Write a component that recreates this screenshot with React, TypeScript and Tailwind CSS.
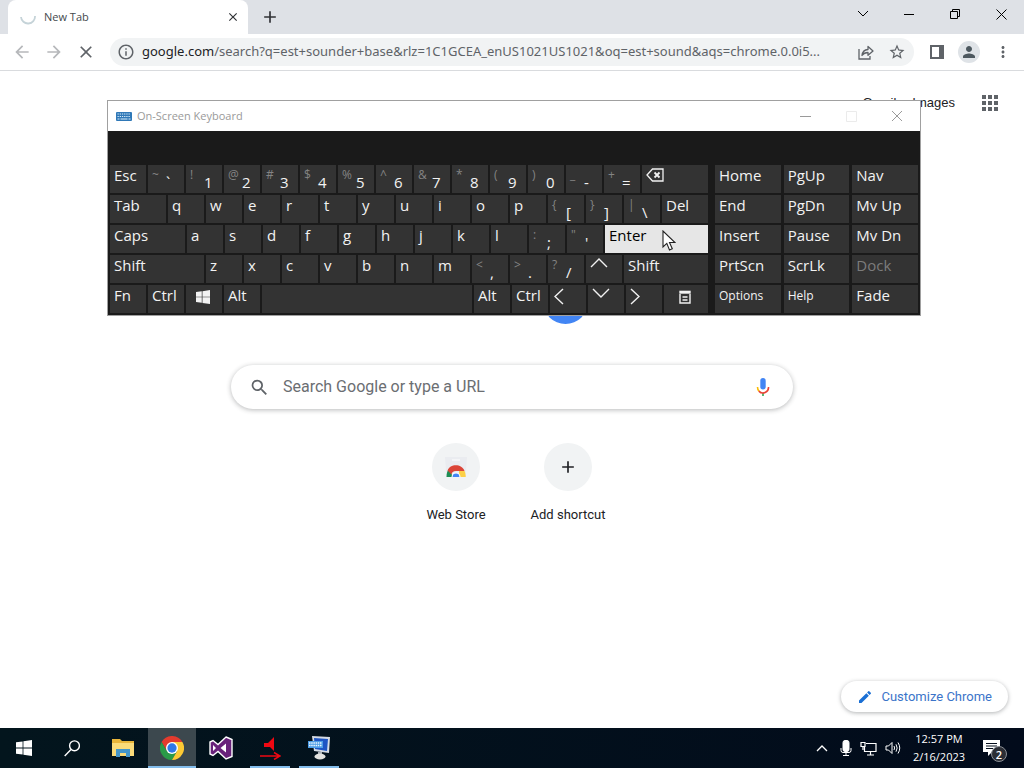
import type { ReactNode } from 'react'
import clsx from 'clsx'
import {
  MdAdd,
  MdApps,
  MdArrowBack,
  MdArrowForward,
  MdClose,
  MdEdit,
  MdInfoOutline,
  MdMoreVert,
  MdPerson,
  MdSearch,
  MdStarBorder,
} from 'react-icons/md'

type KeyDef = {
  label?: string
  shifted?: string
  icon?: ReactNode
  name?: string
  width?: string
  tone?: 'pressed' | 'disabled'
  small?: boolean
}

const letters = (text: string): KeyDef[] => text.split('').map((label) => ({ label }))

const pairs = (text: string): KeyDef[] =>
  text.split(' ').map((pair) => ({ shifted: pair[0], label: pair[1] }))

const BackspaceIcon = (
  <svg width="18" height="14" viewBox="0 0 18 14" fill="none" stroke="currentColor" strokeWidth="1.3">
    <path d="M1 7 6.500 1H17v12H6.500z" />
    <path d="m8.500 4.500 5 5m0-5-5 5" strokeWidth="1.800" />
  </svg>
)

const Chevron = ({ d, width, height }: { d: string; width: number; height: number }) => (
  <svg width={width} height={height} viewBox={`0 0 ${width} ${height}`} fill="none" stroke="currentColor" strokeWidth="1.4">
    <path d={d} />
  </svg>
)

const WindowsIcon = ({ size }: { size: number }) => (
  <svg width={size} height={size} viewBox="0 0 16 16" fill="currentColor">
    <path d="M0 2.300 6.600 1.400V7.600H0zM7.400 1.300 16 0v7.600H7.400zM0 8.400h6.600v6.200L0 13.700zM7.400 8.400H16V16l-8.600-1.200z" />
  </svg>
)

const MenuIcon = (
  <svg width="12" height="14" viewBox="0 0 12 14" fill="none" stroke="currentColor" strokeWidth="1.4">
    <path d="M1 4v9h10V4M3.500 7h5M3.500 10h5" />
    <path d="M.3 2.200h11.400" strokeWidth="3" />
  </svg>
)

const MAIN_ROWS: KeyDef[][] = [
  [
    { label: 'Esc' },
    ...pairs('~` !1 @2 #3 $4 %5 ^6 &7 *8 (9 )0 _- +='),
    { icon: BackspaceIcon, name: 'Backspace', width: 'flex-1' },
  ],
  [
    { label: 'Tab', width: 'w-14' },
    ...letters('qwertyuiop'),
    ...pairs('{[ }] |\\'),
    { label: 'Del', width: 'flex-1' },
  ],
  [
    { label: 'Caps', width: 'w-[75px]' },
    ...letters('asdfghjkl'),
    ...pairs(':; "\''),
    { label: 'Enter', width: 'flex-1', tone: 'pressed' },
  ],
  [
    { label: 'Shift', width: 'w-[94px]' },
    ...letters('zxcvbnm'),
    ...pairs('<, >. ?/'),
    { icon: <Chevron d="m1 9 8-8 8 8" width={18} height={10} />, name: 'Up' },
    { label: 'Shift', width: 'flex-1' },
  ],
  [
    { label: 'Fn' },
    { label: 'Ctrl' },
    { icon: <span className="block pt-0.5 pl-1.5"><WindowsIcon size={14} /></span>, name: 'Windows' },
    { label: 'Alt' },
    { name: 'Space', width: 'flex-1' },
    { label: 'Alt' },
    { label: 'Ctrl' },
    { icon: <Chevron d="M9 1 1 8.500 9 16" width={10} height={17} />, name: 'Left' },
    { icon: <Chevron d="m1 1 8 8 8-8" width={18} height={10} />, name: 'Down' },
    { icon: <Chevron d="m1 1 8 7.500L1 16" width={10} height={17} />, name: 'Right' },
    { icon: <span className="block pt-0.5 pl-[11px]">{MenuIcon}</span>, name: 'Menu', width: 'w-11' },
  ],
]

const SIDE_KEYS: KeyDef[] = [
  { label: 'Home' },
  { label: 'PgUp' },
  { label: 'Nav' },
  { label: 'End' },
  { label: 'PgDn' },
  { label: 'Mv Up' },
  { label: 'Insert' },
  { label: 'Pause' },
  { label: 'Mv Dn' },
  { label: 'PrtScn' },
  { label: 'ScrLk' },
  { label: 'Dock', tone: 'disabled' },
  { label: 'Options', small: true },
  { label: 'Help', small: true },
  { label: 'Fade' },
]

function Key({ label, shifted, icon, name, width = 'w-9', tone, small }: KeyDef) {
  return (
    <button
      type="button"
      aria-label={name}
      disabled={tone === 'disabled'}
      className={clsx(
        'flex h-7 items-start overflow-hidden whitespace-nowrap pl-1 text-left leading-5',
        width,
        width !== 'flex-1' && 'shrink-0',
        small ? 'pt-px text-xs' : 'text-[15px]',
        tone === 'pressed' && 'bg-[#e6e6e6] text-black',
        tone === 'disabled' && 'bg-[#333] text-[#7c7c7c]',
        !tone && 'bg-[#333] text-[#f2f2f2]',
      )}
    >
      {shifted && <span className="w-3.5 shrink-0 text-xs leading-5 text-[#848484]">{shifted}</span>}
      {shifted ? <span className="pt-[7px]">{label}</span> : label}
      {icon && <span className="pt-[3px]">{icon}</span>}
    </button>
  )
}

function OnScreenKeyboard() {
  return (
    <section
      aria-label="On-Screen Keyboard"
      className="absolute left-[107px] top-[100px] w-[814px] border border-[#a0a0a0] bg-[#1a1a1a] font-['Open_Sans',sans-serif]"
    >
      <header className="flex h-[30px] items-center bg-white pl-2 text-[#9a9a9a]">
        <svg width="16" height="9" viewBox="0 0 16 9">
          <rect width="16" height="9" rx="1" fill="#2f78b7" />
          <path d="M1.500 2h13M1.500 4.500h13" stroke="#d8ecfa" strokeWidth="1.200" strokeDasharray="1.300 .9" />
          <path d="M1.500 7h2m1 0h7m1 0h2" stroke="#d8ecfa" strokeWidth="1.200" />
        </svg>
        <h2 className="flex-1 pl-[5px] text-[11px]">On-Screen Keyboard</h2>
        <button type="button" aria-label="Minimize" className="flex w-[46px] justify-center">
          <svg width="11" height="11" viewBox="0 0 11 11" stroke="currentColor"><path d="M0 5.500h11" /></svg>
        </button>
        <button type="button" aria-label="Maximize" disabled className="flex w-[46px] justify-center text-[#ebebeb]">
          <svg width="11" height="11" viewBox="0 0 11 11" fill="none" stroke="currentColor"><path d="M.5.5h10v10H.5z" /></svg>
        </button>
        <button type="button" aria-label="Close" className="flex w-[46px] justify-center">
          <svg width="12" height="12" viewBox="0 0 12 12" stroke="currentColor"><path d="m1 1 10 10M11 1 1 11" /></svg>
        </button>
      </header>
      <div className="flex gap-[7px] px-0.5 pb-0.5 pt-[34px]">
        <div className="flex w-[598px] flex-col gap-0.5">
          {MAIN_ROWS.map((row, i) => (
            <div key={i} className="flex gap-0.5">
              {row.map((key, j) => (
                <Key key={j} {...key} />
              ))}
            </div>
          ))}
        </div>
        <div className="grid flex-1 grid-cols-3 gap-x-[3px] gap-y-0.5">
          {SIDE_KEYS.map((key) => (
            <Key key={key.label} {...key} width="w-full" />
          ))}
        </div>
      </div>
      <svg className="absolute left-[554px] top-[129px]" width="14" height="21" viewBox="0 0 14 21">
        <path d="M1 1v16l3.800-3.600L7.500 20l2.800-1.200-2.800-6.300H13z" fill="#fff" stroke="#222" strokeWidth="1.100" />
      </svg>
    </section>
  )
}

function TabStrip() {
  return (
    <div className="flex h-[34px] items-stretch bg-[#dee1e6] pl-2 font-['Open_Sans',sans-serif]">
      <div className="flex w-60 items-center rounded-t-lg bg-white pl-3 pr-2 text-[#45494d]">
        <svg width="16" height="16" viewBox="0 0 16 16" fill="none" stroke="#c5d3d8" strokeWidth="1.800">
          <path d="M1 8a7 7 0 0 0 14-1" />
        </svg>
        <span className="flex-1 pl-2 text-[11px]">New Tab</span>
        <button type="button" aria-label="Close tab" className="text-[#303236]">
          <MdClose size={14} stroke="currentColor" />
        </button>
      </div>
      <button type="button" aria-label="New tab" className="px-3 text-[#303236]">
        <MdAdd size={20} />
      </button>
      <div className="flex flex-1 items-center justify-end pb-1.5 text-black">
        <button type="button" aria-label="Search tabs" className="flex w-[46px] justify-center">
          <svg width="12" height="8" viewBox="0 0 12 8" fill="none" stroke="currentColor"><path d="m1 1 5 5 5-5" /></svg>
        </button>
        <button type="button" aria-label="Minimize" className="flex w-[46px] justify-center">
          <svg width="10" height="10" viewBox="0 0 10 10" stroke="currentColor"><path d="M0 5.500h10" /></svg>
        </button>
        <button type="button" aria-label="Restore" className="flex w-[46px] justify-center">
          <svg width="10" height="10" viewBox="0 0 10 10" fill="none" stroke="currentColor"><path d="M.5 2.500h7v7h-7zM2.500 2.500v-2h7v7h-2" /></svg>
        </button>
        <button type="button" aria-label="Close" className="flex w-[46px] justify-center">
          <svg width="11" height="11" viewBox="0 0 11 11" stroke="currentColor"><path d="m.5.5 10 10m0-10-10 10" /></svg>
        </button>
      </div>
    </div>
  )
}

function Toolbar() {
  return (
    <div className="flex h-[37px] items-center border-b border-[#d9dbde] bg-white pl-3 pr-3 text-[#5f6368]">
      <div className="flex w-[98px] gap-3">
        <button type="button" aria-label="Back" className="text-[#b6b8bb]"><MdArrowBack size={20} /></button>
        <button type="button" aria-label="Forward" className="text-[#b6b8bb]"><MdArrowForward size={20} /></button>
        <button type="button" aria-label="Stop"><MdClose size={20} /></button>
      </div>
      <div className="flex h-7 flex-1 items-center rounded-full bg-[#f1f3f4] pl-[7px] pr-2 font-['Noto_Sans',sans-serif] text-[13px]">
        <MdInfoOutline size={18} />
        <label htmlFor="omnibox" className="pl-[7px] text-[#202124]">google.com</label>
        <input
          id="omnibox"
          type="text"
          readOnly
          value="/search?q=est+sounder+base&rlz=1C1GCEA_enUS1021US1021&oq=est+sound&aqs=chrome.0.0i5..."
          className="min-w-0 flex-1 bg-transparent outline-none"
        />
        <button type="button" aria-label="Share" className="mr-3.5">
          <svg width="16" height="15" viewBox="0 0 16 15" fill="none" stroke="currentColor" strokeWidth="1.300">
            <path d="M1 4v10h11v-3" />
            <path d="M4 10.500C4.500 6.500 7 4.700 10 4.500V1.500L15 6l-5 4.300V7.500C7.500 7.500 5.500 8.300 4 10.500z" strokeLinejoin="round" />
          </svg>
        </button>
        <button type="button" aria-label="Bookmark"><MdStarBorder size={18} /></button>
      </div>
      <div className="flex items-center gap-3.5 pl-4">
        <button type="button" aria-label="Side panel">
          <svg width="14" height="14" viewBox="0 0 14 14" fill="currentColor"><path d="M0 0h14v14H0zM2 2v10h7V2z" fillRule="evenodd" /></svg>
        </button>
        <button type="button" aria-label="Profile" className="flex size-[22px] items-center justify-center rounded-full bg-[#dfe3e7] text-[#4d585f]">
          <MdPerson size={18} />
        </button>
        <button type="button" aria-label="Menu"><MdMoreVert size={18} /></button>
      </div>
    </div>
  )
}

const MicIcon = (
  <svg width="24" height="24" viewBox="0 0 24 24">
    <rect x="9.300" y="3" width="5.400" height="11.500" rx="2.700" fill="#4285f4" />
    <path d="M11.200 18h1.600v3h-1.600z" fill="#34a853" />
    <path d="M6.500 12c0 1.800.5 3.200 1.600 4.300" fill="none" stroke="#fbbc04" strokeWidth="1.600" />
    <path d="M7.900 16.100A5.500 5.500 0 0 0 17.500 12" fill="none" stroke="#ea4335" strokeWidth="1.600" />
  </svg>
)

const WebStoreIcon = (
  <svg width="24" height="24" viewBox="0 0 24 24">
    <path d="M1 2h22l-1.500 20h-19z" fill="#eaecf0" />
    <path d="M8 4h8v2H8z" fill="#f4f5f7" />
    <path d="M2.500 22c0-3.500.8-6 2-7.500L9.500 22z" fill="#1e8e55" />
    <path d="M3.600 15.500C6 8.500 18 8.500 20.500 16H12c-3 0-4 1.500-4.500 3.500z" fill="#db4437" />
    <path d="M15 16h5.500c.9 1.600 1.200 3.500 1.200 6H15z" fill="#fdd046" />
    <path d="M7.500 22a4.500 4.500 0 0 1 9 0z" fill="#fff" />
    <path d="M8.600 22a3.400 3.400 0 0 1 6.800 0z" fill="#4285f4" />
  </svg>
)

function Shortcut({ label, children }: { label: string; children: ReactNode }) {
  return (
    <a href="#" className="flex w-28 flex-col items-center gap-4 text-[13px] leading-4 text-[#202124]">
      <span className="flex size-12 items-center justify-center rounded-full bg-[#f1f3f4]">{children}</span>
      {label}
    </a>
  )
}

function NewTabPage() {
  return (
    <main className="flex flex-1 flex-col bg-white font-['Roboto',sans-serif]">
      <nav className="flex h-16 items-center justify-end gap-4 pr-[22px] font-['Liberation_Sans',sans-serif] text-[13px] text-[#202124]">
        <a href="#">Gmail</a>
        <a href="#">Images</a>
        <button type="button" aria-label="Google apps" className="ml-[7px] text-[#5f6368]"><MdApps size={24} /></button>
      </nav>
      <div className="flex flex-1 flex-col items-center">
        <div className="mt-36 size-[45px] translate-x-[53px] rounded-full bg-[#4285f4]" />
        <div className="mt-[41px] flex h-11 w-full max-w-[562px] items-center rounded-full bg-white px-[18px] text-[#5f6368] shadow-[0_1px_5px_rgba(32,33,36,0.32)]">
          <label htmlFor="search"><MdSearch size={21} /></label>
          <input
            id="search"
            type="text"
            placeholder="Search Google or type a URL"
            className="min-w-0 flex-1 bg-transparent pl-[13px] text-base outline-none placeholder:text-[#6b6e72]"
          />
          <button type="button" aria-label="Search by voice">{MicIcon}</button>
        </div>
        <div className="mt-[34px] flex">
          <Shortcut label="Web Store">{WebStoreIcon}</Shortcut>
          <Shortcut label="Add shortcut"><MdAdd size={20} /></Shortcut>
        </div>
      </div>
      <div className="flex justify-end px-4 pb-4">
        <button
          type="button"
          className="flex h-[31px] items-center gap-2 rounded-full bg-white px-4 text-[13px] text-[#3b74c9] shadow-[0_1px_4px_rgba(60,64,67,0.4)]"
        >
          <MdEdit size={16} className="text-[#1a6fd4]" />
          Customize Chrome
        </button>
      </div>
    </main>
  )
}

const FolderIcon = (
  <svg width="22" height="20" viewBox="0 0 22 20">
    <path d="M0 1h8l2 2h12v15H0z" fill="#e9b53a" />
    <path d="M0 5h22v13H0z" fill="#fbdb79" />
    <path d="M4 11h14v8h-4v-4H8v4H4z" fill="#4596c9" />
  </svg>
)

const ChromeIcon = (
  <svg width="24" height="24" viewBox="0 0 48 48">
    <path d="M24 12h20.800A24 24 0 0 0 3.200 12L13.600 30z" fill="#e33b2e" />
    <path d="M13.600 30 3.200 12A24 24 0 0 0 24 48l10.400-18z" fill="#2a9b48" />
    <path d="M34.400 30 24 48a24 24 0 0 0 20.800-36H24z" fill="#fcc934" />
    <circle cx="24" cy="24" r="12" fill="#fff" />
    <circle cx="24" cy="24" r="9.300" fill="#3078e8" />
  </svg>
)

const VisualStudioIcon = (
  <svg width="24" height="24" viewBox="0 0 24 24">
    <path d="M17 1 23 3.500v17L17 23l-8-7.500L4 19.500 1 18V6l3-1.500 5 4z" fill="#68217a" stroke="#fff" strokeWidth="1.400" />
    <path d="M17 7.500 11.500 12l5.500 4.500zM4 9v6l3-3z" fill="#fff" />
  </svg>
)

const RedArrowIcon = (
  <svg width="22" height="24" viewBox="0 0 22 24">
    <path d="M15 1v14l-4-4H5V7h4z" fill="#f00812" />
    <path d="M1 20h20m-6-3.500 6 3.500-6 3.500" fill="none" stroke="#f00812" strokeWidth="1.500" />
  </svg>
)

const OskTaskIcon = (
  <svg width="24" height="24" viewBox="0 0 24 24">
    <path d="m5 0 18 1-1 16-15-2z" fill="#d5dbe4" />
    <path d="m7 2 14 1-1 12-12-2z" fill="#1d55c4" />
    <path d="M11 16h4v4h-4z" fill="#aab0b7" />
    <ellipse cx="13" cy="20.500" rx="5.500" ry="3" fill="#e2e2df" />
    <rect x="1" y="5" width="15" height="7" fill="#4c9de6" />
    <path d="M2 7h13M2 9.500h13" stroke="#eaf5ff" strokeWidth="1.300" strokeDasharray="1.500 .7" />
  </svg>
)

const TASKS = [
  { name: 'File Explorer', icon: FolderIcon, state: 'idle' },
  { name: 'Google Chrome', icon: ChromeIcon, state: 'active' },
  { name: 'Visual Studio', icon: VisualStudioIcon, state: 'idle' },
  { name: 'Recorder', icon: RedArrowIcon, state: 'open' },
  { name: 'On-Screen Keyboard', icon: OskTaskIcon, state: 'open' },
]

function Taskbar() {
  return (
    <footer className="flex h-10 items-stretch bg-linear-to-r from-[#03151d] to-[#020b1b] font-['Open_Sans',sans-serif] text-white">
      <button type="button" aria-label="Start" className="flex w-12 items-center justify-center"><WindowsIcon size={16} /></button>
      <button type="button" aria-label="Search" className="flex w-12 items-center justify-center">
        <svg width="16" height="17" viewBox="0 0 16 17" fill="none" stroke="currentColor" strokeWidth="1.400">
          <circle cx="10.500" cy="5.800" r="4.900" />
          <path d="M7 9.500.7 16" />
        </svg>
      </button>
      <div className="ml-[3px] flex gap-px">
        {TASKS.map((task) => (
          <button
            key={task.name}
            type="button"
            aria-label={task.name}
            className={clsx('flex w-12 flex-col items-center', task.state === 'active' && 'bg-[#3c484e]')}
          >
            <span className="flex flex-1 items-center">{task.icon}</span>
            <span
              className={clsx(
                '-mt-0.5 h-0.5',
                task.state === 'active' && 'w-full bg-[#83bdec]',
                task.state === 'open' && 'w-10 bg-[#83bdec]',
              )}
            />
          </button>
        ))}
      </div>
      <div className="ml-auto flex items-center gap-2 pr-6">
        <button type="button" aria-label="Show hidden icons">
          <svg width="12" height="8" viewBox="0 0 12 8" fill="none" stroke="currentColor" strokeWidth="1.300"><path d="m1 7 5-5 5 5" /></svg>
        </button>
        <svg className="ml-1" width="12" height="16" viewBox="0 0 12 16" fill="none" stroke="currentColor">
          <rect x="3" y=".5" width="6" height="11" rx="2" fill="currentColor" />
          <path d="M1 8v2.500q0 2 2 2h6q2 0 2-2V8M6 12.500v3M3 15.500h6" />
        </svg>
        <svg width="17" height="15" viewBox="0 0 17 15" fill="none" stroke="currentColor" strokeWidth="1.200">
          <path d="M6 2.500h10v8H4.500V6M10.500 10.500v3M7 14h7" />
          <path d="M1 1.500h4v4H1zM3 5.500V9" />
        </svg>
        <svg width="16" height="14" viewBox="0 0 16 14" fill="none" stroke="currentColor">
          <path d="M1 5h2.500L7 1.500v11L3.500 9H1z" />
          <path d="M9 5q1.200 2 0 4M11 3.300q2.300 3.700 0 7.400M13 1.500q3.500 5.500 0 11" />
        </svg>
        <time className="w-[60px] text-center text-[11px] leading-[18px]">
          <span className="block">12:57 PM</span>
          <span className="block">2/16/2023</span>
        </time>
        <button type="button" aria-label="Notifications" className="relative ml-1.5">
          <svg width="17" height="16" viewBox="0 0 17 16">
            <path d="M0 0h17v12H9l-4 4v-4H0z" fill="#fff" />
            <path d="M3 3.500h11M3 6h11M3 8.500h7" stroke="#06101e" />
          </svg>
          <span className="absolute left-2 top-1.5 flex size-4 items-center justify-center rounded-full border border-[#8b8f96] bg-[#2b2e35] text-[11px] font-semibold leading-none">
            2
          </span>
        </button>
      </div>
    </footer>
  )
}

export default function App() {
  return (
    <div className="relative flex min-h-screen flex-col overflow-hidden bg-white">
      <TabStrip />
      <Toolbar />
      <NewTabPage />
      <Taskbar />
      <OnScreenKeyboard />
    </div>
  )
}
